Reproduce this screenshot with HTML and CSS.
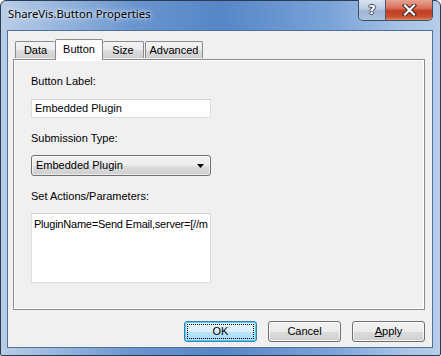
FILE: index.html
```html
<!DOCTYPE html>
<html>
<head>
<meta charset="utf-8">
<link rel="stylesheet" href="styles.css">
</head>
<body>
<div class="window">
  <div class="titlebar">
    <span class="title">ShareVis.Button Properties</span>
    <div class="caption-buttons">
      <div class="cb help"><span class="qmark">?</span></div>
      <div class="cb close">
        <svg width="15" height="12" viewBox="0 0 15 12">
          <path d="M3 1.5 L12 10.5 M12 1.5 L3 10.5" stroke="#3b2320" stroke-width="4.2" fill="none" stroke-linecap="square"/>
          <path d="M3 1.5 L12 10.5 M12 1.5 L3 10.5" stroke="#ffffff" stroke-width="2.2" fill="none" stroke-linecap="square"/>
        </svg>
      </div>
    </div>
  </div>
  <div class="client">
    <div class="tabs">
      <div class="tab tab-data">Data</div>
      <div class="tab tab-button active">Button</div>
      <div class="tab tab-size">Size</div>
      <div class="tab tab-adv">Advanced</div>
    </div>
    <div class="panel">
      <div class="label">Button Label:</div>
      <div class="textbox">Embedded Plugin</div>
      <div class="label gap">Submission Type:</div>
      <div class="combo">
        <span>Embedded Plugin</span>
        <svg class="arrow" width="7" height="4" viewBox="0 0 7 4"><path d="M0 0 H7 L3.5 4 Z" fill="#000"/></svg>
      </div>
      <div class="label gap">Set Actions/Parameters:</div>
      <div class="textarea">PluginName=Send Email,server=[//m</div>
    </div>
    <div class="footer">
      <div class="btn default"><span class="focus">OK</span></div>
      <div class="btn">Cancel</div>
      <div class="btn"><span><u>A</u>pply</span></div>
    </div>
  </div>
</div>
</body>
</html>
```
FILE: styles.css
```css
* { box-sizing: border-box; }
html, body { margin: 0; padding: 0; background: #fff; }
body { width: 441px; height: 356px; overflow: hidden; }

.window {
  width: 441px;
  height: 356px;
  border: 1px solid #2b3c52;
  border-radius: 6px 6px 2px 2px;
  background:
    linear-gradient(90deg, #b9cde6 0%, #9ab8df 12%, #6a96cf 30%, #5686c6 50%, #7aa3d8 75%, #a9c4e6 92%, #b7cde9 100%);
  padding: 0 7px 7px 6px;
  display: flex;
  flex-direction: column;
  font-family: "Liberation Sans", Arial, sans-serif;
  font-size: 11px;
  color: #000;
}

.titlebar {
  height: 29px;
  display: flex;
  align-items: flex-start;
  flex: none;
}
.title {
  font-family: "Noto Sans", "Open Sans", sans-serif;
  font-size: 11.3px;
  color: #000;
  margin-left: 1px;
  margin-top: 5px;
  line-height: 16px;
  text-shadow: 0 0 6px rgba(255,255,255,0.9), 0 0 3px rgba(255,255,255,0.8);
}
.caption-buttons {
  margin-left: auto;
  margin-top: -1px;
  display: flex;
  height: 21px;
  border: 1px solid #3a4f6a;
  border-top: none;
  border-radius: 0 0 5px 5px;
  overflow: hidden;
}
.cb {
  height: 20px;
  display: flex;
  align-items: center;
  justify-content: center;
}
.help {
  width: 27px;
  background: linear-gradient(180deg, #d8e3f0 0%, #b9cbe2 45%, #9fb5d2 55%, #aec3de 100%);
  border-right: 1px solid #4a5a70;
}
.qmark {
  font-family: "DejaVu Sans", sans-serif;
  font-weight: bold;
  font-size: 13px;
  color: #fff;
  text-shadow: 1px 0 0 #3a4656, -1px 0 0 #3a4656, 0 1px 0 #3a4656, 0 -1px 0 #3a4656;
  line-height: 14px;
}
.close {
  width: 46px;
  background: linear-gradient(180deg, #e8a493 0%, #d8705a 40%, #c13c24 55%, #c9522f 85%, #e08a66 100%);
}

.client {
  flex: 1;
  background: #f0f0f0;
  border: 1px solid #50709a;
  padding: 7px 7px 0 5px;
  display: flex;
  flex-direction: column;
}

.tabs {
  display: flex;
  align-items: flex-end;
  padding-left: 2px;
  height: 21px;
  position: relative;
  z-index: 1;
}
.tab {
  height: 17px;
  border: 1px solid #898c95;
  border-bottom: none;
  border-radius: 2px 2px 0 0;
  background: linear-gradient(180deg, #f3f3f3 0%, #ebebeb 50%, #dddddd 51%, #cfcfcf 100%);
  display: flex;
  align-items: center;
  justify-content: center;
  line-height: 13px;
  padding-top: 1px;
  margin-bottom: 1px;
}
.tab-data { width: 40px; border-right: none; }
.tab-button { width: 48px; }
.tab-size { width: 41px; border-left: none; }
.tab-adv { width: 58px; margin-left: 1px; }
.tab.active {
  height: 21px;
  margin-bottom: -1px;
  background: #fcfcfc;
  align-items: flex-start;
  padding-top: 3px;
}

.panel {
  height: 251px;
  border: 1px solid #898c95;
  background: #f0f0f0;
  box-shadow: inset 1px 1px 0 #fff, inset -1px -1px 0 #fff;
  padding: 15px 0 0 17px;
  display: flex;
  flex-direction: column;
  align-items: flex-start;
}
.label {
  line-height: 13px;
  height: 13px;
  margin-bottom: 11px;
}
.label.gap { margin-top: 14px; margin-bottom: 10px; }

.textbox {
  width: 180px;
  height: 19px;
  background: #fff;
  border: 1px solid #dcdde2;
  border-top-color: #cfd0d6;
  padding: 2px 0 0 3px;
  line-height: 13px;
}
.combo {
  width: 180px;
  height: 21px;
  border: 1px solid #707070;
  border-radius: 3px;
  background: linear-gradient(180deg, #f2f2f2 0%, #ebebeb 50%, #dddddd 51%, #cfcfcf 100%);
  box-shadow: inset 0 0 0 1px rgba(255,255,255,0.6);
  display: flex;
  align-items: center;
  padding: 0 5px 0 4px;
  line-height: 13px;
}
.combo .arrow { margin-left: auto; margin-right: 1px; }
.textarea {
  width: 180px;
  height: 70px;
  background: #fff;
  border: 1px solid #dcdde2;
  border-top-color: #cfd0d6;
  padding: 4px 0 0 2px;
  line-height: 13px;
  white-space: nowrap;
  overflow: hidden;
  letter-spacing: -0.22px;
}

.footer {
  display: flex;
  justify-content: flex-end;
  gap: 11px;
  padding-top: 11px;
}
.btn {
  width: 73px;
  height: 21px;
  border: 1px solid #707070;
  border-radius: 3px;
  background: linear-gradient(180deg, #f2f2f2 0%, #ebebeb 50%, #dddddd 51%, #cfcfcf 100%);
  box-shadow: inset 0 0 0 1px rgba(255,255,255,0.7);
  display: flex;
  align-items: center;
  justify-content: center;
  line-height: 13px;
}
.btn.default {
  border-color: #3c7fb1;
  background: linear-gradient(180deg, #eaf6fd 0%, #d9f0fc 50%, #bee6fd 51%, #a7d9f5 100%);
  box-shadow: inset 0 0 0 1px #48d0f8;
  padding: 2px;
}
.focus {
  flex: 1;
  align-self: stretch;
  border: 1px dotted #000;
  display: flex;
  align-items: center;
  justify-content: center;
}
```
